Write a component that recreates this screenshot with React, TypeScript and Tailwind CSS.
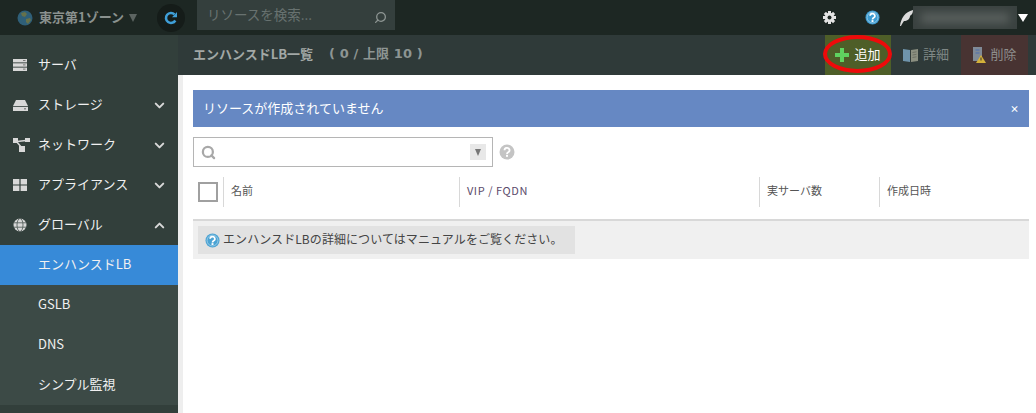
import { ChevronDown, ChevronUp, Search } from 'lucide-react'

const FONT = "font-['Noto_Sans_CJK_JP','Noto_Sans',sans-serif]"

function ServerIcon() {
  return (
    <svg width="14" height="12" viewBox="0 0 14 12" fill="#d8d8d8">
      <rect x="0" y="0" width="14" height="3.4" />
      <rect x="0" y="4.3" width="14" height="3.4" />
      <rect x="0" y="8.6" width="14" height="3.4" />
      <rect x="10" y="1" width="2.5" height="1" fill="#777" />
      <rect x="10" y="5.4" width="2.5" height="1" fill="#777" />
      <rect x="10" y="9.6" width="2.5" height="1" fill="#777" />
    </svg>
  )
}

function StorageIcon() {
  return (
    <svg width="15" height="11" viewBox="0 0 15 11" fill="#d8d8d8">
      <path d="M3 0h9l3 6H0z" />
      <path d="M0 6.800h15V11H0z" />
      <rect x="11" y="8.200" width="2" height="1.200" fill="#777" />
    </svg>
  )
}

function NetworkIcon() {
  return (
    <svg width="17" height="14" viewBox="0 0 17 14" fill="#d8d8d8">
      <path d="M3 3L9 10M4 3.500L13 2.500" stroke="#d8d8d8" strokeWidth="1.500" />
      <rect x="0" y="0" width="5" height="5" />
      <rect x="12" y="0" width="5" height="4" />
      <rect x="6" y="8" width="6" height="6" />
    </svg>
  )
}

function GridIcon() {
  return (
    <svg width="14" height="12" viewBox="0 0 14 12" fill="#d8d8d8">
      <rect x="0" y="0" width="6.400" height="5.500" />
      <rect x="7.600" y="0" width="6.400" height="5.500" />
      <rect x="0" y="6.500" width="6.400" height="5.500" />
      <rect x="7.600" y="6.500" width="6.400" height="5.500" />
    </svg>
  )
}

function GlobeIcon() {
  return (
    <svg width="14" height="14" viewBox="0 0 14 14" fill="none">
      <circle cx="7" cy="7" r="6.500" fill="#d8d8d8" />
      <ellipse cx="7" cy="7" rx="3" ry="6.500" stroke="#4a5552" strokeWidth="0.800" />
      <path d="M0.500 4.800h13M0.500 9.200h13" stroke="#4a5552" strokeWidth="0.800" />
    </svg>
  )
}

function GearIcon() {
  return (
    <svg width="13" height="13" viewBox="0 0 13 13">
      {[0, 45, 90, 135].map((deg) => (
        <rect key={deg} x="5" y="0" width="3" height="13" fill="#e4e4e4" transform={`rotate(${deg} 6.500 6.500)`} />
      ))}
      <circle cx="6.500" cy="6.500" r="4.700" fill="#e4e4e4" />
      <circle cx="6.500" cy="6.500" r="2" fill="#1d2723" />
    </svg>
  )
}

function HelpDot({ size, bg, ring = true }: { size: number; bg: string; ring?: boolean }) {
  return (
    <svg width={size} height={size} viewBox="0 0 16 16">
      <circle cx="8" cy="8" r="7.500" fill={bg} />
      {ring && <circle cx="8" cy="8" r="5.800" fill="none" stroke="#fff" strokeWidth="0.700" opacity="0.600" />}
      <path d="M5.500 6.200a2.500 2.300 0 1 1 3.700 2c-.9.500-1.200.8-1.200 1.800" fill="none" stroke="#fff" strokeWidth="1.800" />
      <rect x="7" y="10.800" width="2" height="2" fill="#fff" />
    </svg>
  )
}

const MENU = [
  { label: 'サーバ', icon: <ServerIcon /> },
  { label: 'ストレージ', icon: <StorageIcon />, chevron: 'down' },
  { label: 'ネットワーク', icon: <NetworkIcon />, chevron: 'down' },
  { label: 'アプライアンス', icon: <GridIcon />, chevron: 'down' },
  { label: 'グローバル', icon: <GlobeIcon />, chevron: 'up' },
]

const SUB_MENU = ['エンハンスドLB', 'GSLB', 'DNS', 'シンプル監視']

const COLUMNS = [
  { label: 'VIP / FQDN', width: 'w-[300px]', color: 'text-[#5b4a6b] tracking-[0.55px]' },
  { label: '実サーバ数', width: 'w-[120px]', color: 'text-[#555]' },
  { label: '作成日時', width: 'flex-1', color: 'text-[#555]' },
]

export default function App() {
  return (
    <div className={`w-[1036px] h-[413px] overflow-hidden flex flex-col bg-white ${FONT}`}>
      {/* top bar */}
      <header className="h-[35px] shrink-0 bg-[#1d2723] flex items-center">
        <svg className="ml-[17px]" width="16" height="16" viewBox="0 0 16 16">
          <circle cx="8" cy="8" r="7.500" fill="#2f5f78" />
          <path d="M4 3l4-1 2 2-2 3-3-1zM9 9l4-1 1 2-3 4-2-2z" fill="#66714a" />
        </svg>
        <span className="ml-[6px] text-[13px] font-bold text-[#8a918e] leading-none -translate-y-px">東京第1ゾーン</span>
        <span className="ml-[5px] w-0 h-0 border-x-[4.500px] border-x-transparent border-t-[8px] border-t-[#5c6461]" />
        <div className="ml-[20px] w-7 h-7 rounded-full bg-[#151c19] flex items-center justify-center">
          <svg width="14" height="14" viewBox="0 0 14 14" fill="none">
            <path d="M11.300 9.500A5 5 0 1 1 10.500 3.400" stroke="#3f9fd8" strokeWidth="2.600" />
            <path d="M8 6.200h5V1z" fill="#3f9fd8" />
          </svg>
        </div>
        <div className="ml-3 w-[198px] h-[30px] self-start bg-[#343f3d] flex items-center justify-between pl-[10px] pr-[8px]">
          <span className="text-[13.500px] text-[#687270] -translate-y-px">リソースを検索...</span>
          <Search size={13} strokeWidth={2.400} className="text-[#8d9593] -scale-x-100 mt-[4px]" />
        </div>
        <div className="ml-auto flex items-center">
          <GearIcon />
          <div className="ml-[29px]">
            <HelpDot size={15} bg="#3d9bd0" />
          </div>
          <svg className="ml-[19px]" width="14" height="16" viewBox="0 0 14 16">
            <path d="M1 16C2 8 6 2 14 0c0 4-2 5-3 6 0 3-3 5-6 5-1 1-2 3-3 5z" fill="#dcdcdc" />
          </svg>
          <div className="w-[104px] h-[23px] overflow-hidden bg-[#3a4240] flex items-center justify-center">
            <div className="w-[88px] h-[10px] bg-[#5a605e] blur-[4px]" />
          </div>
          <span className="ml-[1px] mr-[8px] w-0 h-0 border-x-[5px] border-x-transparent border-t-[8px] border-t-white" />
        </div>
      </header>

      <div className="flex-1 flex min-h-0">
        {/* side menu */}
        <nav className="w-[178px] shrink-0 bg-[#323f3b] pt-[10px] text-white text-[13px]">
          {MENU.map((item) => (
            <div key={item.label} className="h-10 flex items-center">
              <span className="w-[38px] pl-[13px] shrink-0 flex items-center">{item.icon}</span>
              <span className="text-[#f0f0f0] -translate-y-px">{item.label}</span>
              {item.chevron === 'down' && <ChevronDown size={15} strokeWidth={3.200} className="ml-auto mr-[11px] text-[#d8d8d8]" />}
              {item.chevron === 'up' && <ChevronUp size={15} strokeWidth={3.200} className="ml-auto mr-[11px] text-[#d8d8d8]" />}
            </div>
          ))}
          <div className="bg-[#3c4a46]">
            {SUB_MENU.map((label, i) => (
              <div key={label} className={`h-10 flex items-center pl-[38px] text-[#f0f0f0] ${i === 0 ? 'bg-[#378ad8]' : ''}`}>
                <span className="-translate-y-px">{label}</span>
              </div>
            ))}
          </div>
        </nav>

        <main className="relative flex-1 min-w-0 flex flex-col">
          {/* title bar */}
          <div className="h-10 shrink-0 bg-[#2f3a39] flex items-stretch">
            <div className="pl-[15px] flex items-center text-[13px] font-bold text-[#a2a8a6] whitespace-pre">
              <span className="-translate-y-px">エンハンスドLB一覧</span>
              <span className="ml-[16px] -translate-y-px tracking-[0.1px] font-['DejaVu_Sans','Noto_Sans_CJK_JP',sans-serif] text-[#8d9593]">( 0 / 上限 10 )</span>
            </div>
            <div className="ml-auto flex items-stretch text-[13px] mr-[8px]">
              <button className="w-[66px] bg-[#4e5e28] flex items-center justify-center gap-[5px] text-white">
                <svg width="14" height="14" viewBox="0 0 14 14" fill="#5fd35f">
                  <path d="M5 0h4v5h5v4H9v5H5V9H0V5h5z" />
                </svg>
                <span className="-translate-y-px">追加</span>
              </button>
              <button className="w-[70px] flex items-center justify-center gap-[5px] text-[#7f8886]">
                <svg width="15" height="14" viewBox="0 0 15 14">
                  <path d="M0 1l7 1v12l-7-1z" fill="#6f94ab" />
                  <path d="M15 1l-7 1v12l7-1z" fill="#8b8f80" />
                  <path d="M9.500 4.500l4-.7M9.500 7l4-.7M9.500 9.500l4-.7" stroke="#5e6258" strokeWidth="0.700" />
                </svg>
                <span className="-translate-y-px">詳細</span>
              </button>
              <button className="w-[67px] bg-[#483332] flex items-center justify-center gap-[4px] text-[#8e8f8d]">
                <svg width="14" height="16" viewBox="0 0 14 16">
                  <rect x="1" y="0" width="9" height="14" fill="#808a96" />
                  <path d="M3.500 3h4M3.500 6h4" stroke="#4d6fb0" strokeWidth="1.200" />
                  <path d="M9 8l5 8H4z" fill="#d4b13a" />
                  <path d="M9 10.500v3" stroke="#333" strokeWidth="1" />
                </svg>
                <span className="-translate-y-px">削除</span>
              </button>
            </div>
          </div>

          {/* red marker over the add button */}
          <div className="absolute left-[645px] top-0 w-[69px] h-[38px] rounded-[50%] border-[4px] border-[#ee0a0a]" />

          <div className="flex-1 flex min-h-0">
            <div className="w-[5px] shrink-0 bg-[#eeeeee]" />
            <div className="flex-1 min-w-0 pl-[10px] pr-[7px] pt-[15px]">
              <div className="h-[37px] bg-[#6688c3] flex items-center justify-between pl-[10px] pr-[10px] text-[13px] text-white">
                <span className="-translate-y-px">リソースが作成されていません</span>
                <span className="text-[9px] font-bold leading-none">×</span>
              </div>

              <div className="mt-[10px] flex items-center">
                <div className="w-[300px] h-[30px] border border-[#b5b5b5] flex items-center justify-between pl-[7px] pr-[6px]">
                  <Search size={15} strokeWidth={3.600} className="text-[#a8a8a8]" />
                  <span className="w-4 h-4 bg-[#e8e8e8] flex items-center justify-center">
                    <span className="w-0 h-0 border-x-[3.500px] border-x-transparent border-t-[7px] border-t-[#777]" />
                  </span>
                </div>
                <div className="ml-[6px]">
                  <HelpDot size={16} bg="#c4c4c4" ring={false} />
                </div>
              </div>

              {/* table head */}
              <div className="mt-[10px] h-[44px] border-b-2 border-[#d8d8d8] flex items-start text-[11px]">
                <div className="w-[31px] h-[30px] shrink-0 border-r border-[#d8d8d8] pl-[5px] pt-[5px]">
                  <div className="w-5 h-5 border-2 border-[#a0a0a0]" />
                </div>
                <div className="w-[236px] h-[30px] shrink-0 border-r border-[#d8d8d8] pl-[7px] flex items-center text-[#555]">
                  <span className="-translate-y-[2px]">名前</span>
                </div>
                {COLUMNS.map((col) => (
                  <div key={col.label} className={`${col.width} h-[30px] shrink-0 border-r border-[#d8d8d8] last:border-r-0 pl-[7px] flex items-center ${col.color}`}>
                    <span className="-translate-y-[2px]">{col.label}</span>
                  </div>
                ))}
              </div>

              <div className="h-[38px] bg-[#f0f0f0] pl-[5px] pt-[5px]">
                <div className="w-[377px] h-[28px] bg-[#e2e2e2] flex items-center pl-[7px] gap-[3px] text-[12px] text-[#444] tracking-[0.08px]">
                  <HelpDot size={15} bg="#4ba3d3" />
                  <span className="-translate-y-px">エンハンスドLBの詳細についてはマニュアルをご覧ください。</span>
                </div>
              </div>
            </div>
          </div>
        </main>
      </div>
    </div>
  )
}
